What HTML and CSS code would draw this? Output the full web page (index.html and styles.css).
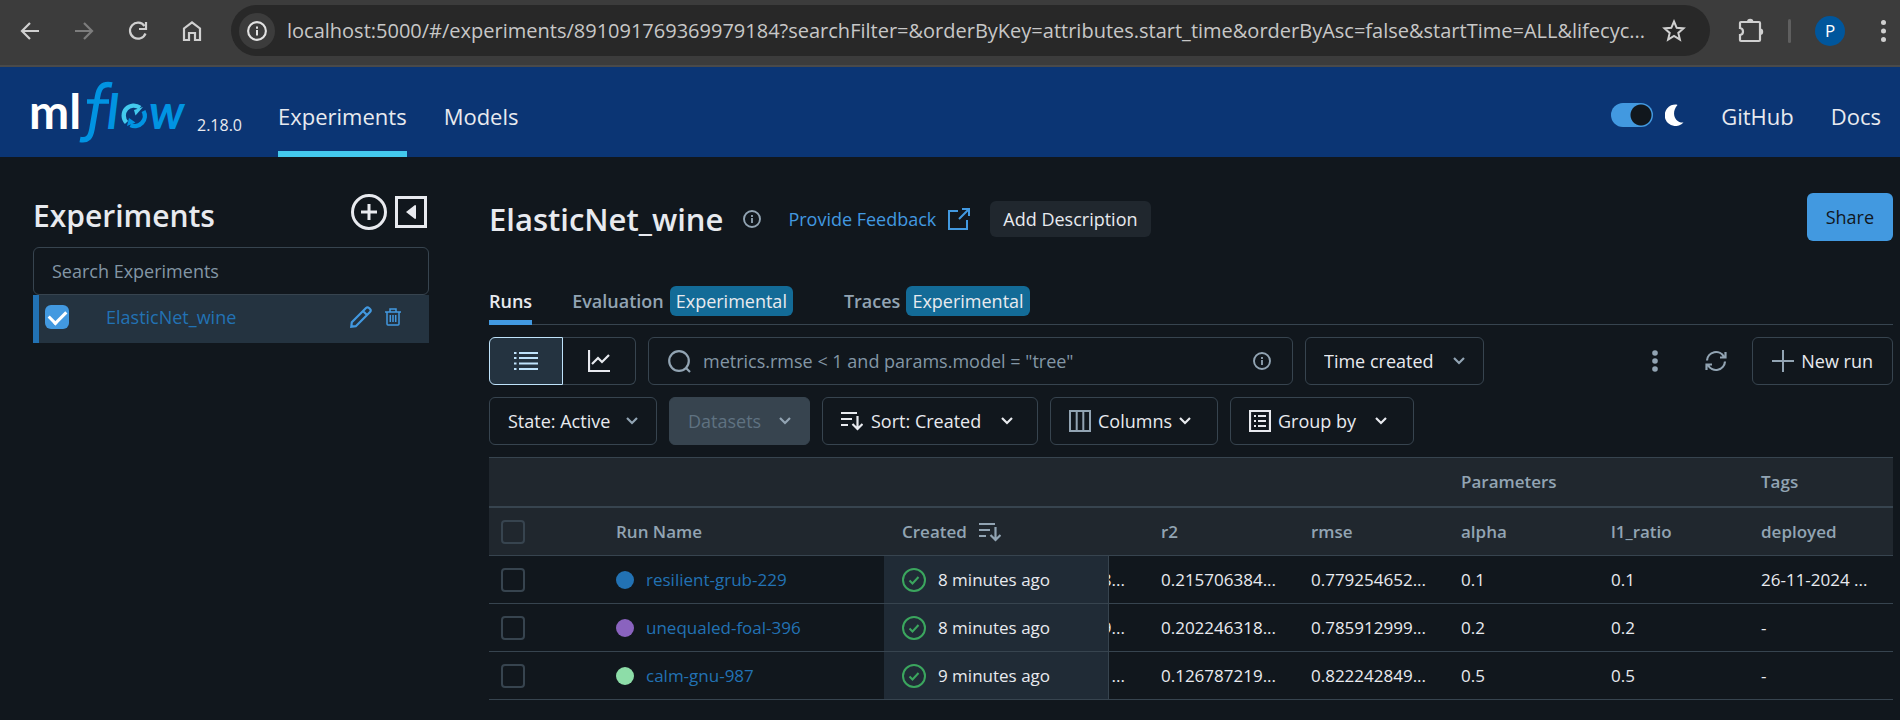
FILE: index.html
```
<!DOCTYPE html>
<html lang="en">
<head>
<meta charset="utf-8">
<title>ElasticNet_wine - MLflow</title>
<link rel="stylesheet" href="styles.css">
</head>
<body>
<svg class="defs" aria-hidden="true">
  <symbol id="chevron" viewBox="0 0 12 8"><path d="M1 1l5 5 5-5" fill="none" stroke="currentColor" stroke-width="2.2"/></symbol>
  <symbol id="info" viewBox="0 0 18 18"><circle cx="9" cy="9" r="8" fill="none" stroke="currentColor" stroke-width="1.9"/><path d="M9 8v5M9 5v2" stroke="currentColor" stroke-width="1.8"/></symbol>
  <symbol id="sort" viewBox="0 0 22 20"><path d="M0 2h16M0 8h11M0 14h7" stroke="currentColor" stroke-width="2.2"/><path d="M16.500 5v13M11.500 13l5 5 5-5" fill="none" stroke="currentColor" stroke-width="2.200"/></symbol>
  <symbol id="finished" viewBox="0 0 24 24"><circle cx="12" cy="12" r="11" fill="none" stroke="currentColor" stroke-width="2"/><path d="M7.500 12.500l3 3 6-6.500" fill="none" stroke="currentColor" stroke-width="2"/></symbol>
</svg>

<div class="browser">
  <div class="browser-nav">
    <button class="icon-btn" aria-label="Back"><svg width="20" height="20" viewBox="0 0 20 20"><path d="M19 10H2M10 2L2 10l8 8" fill="none" stroke="#d0d0d0" stroke-width="2.200"/></svg></button>
    <button class="icon-btn" aria-label="Forward"><svg width="20" height="20" viewBox="0 0 20 20"><path d="M1 10h17M10 2l8 8-8 8" fill="none" stroke="#7d7d7d" stroke-width="2.200"/></svg></button>
    <button class="icon-btn" aria-label="Reload"><svg width="20" height="20" viewBox="0 0 20 20"><path d="M17.500 12.500A8 8 0 1 1 16.500 5" fill="none" stroke="#d0d0d0" stroke-width="2.200"/><path d="M18 1v7h-7" fill="none" stroke="#d0d0d0" stroke-width="2.200"/></svg></button>
    <button class="icon-btn" aria-label="Home"><svg width="20" height="22" viewBox="0 0 20 22"><path d="M2 20V8.500L10 2.300l8 6.200V20h-5v-7H7v7z" fill="none" stroke="#d0d0d0" stroke-width="2.200"/></svg></button>
  </div>
  <div class="omnibox">
    <button class="site-info" aria-label="Site information"><svg width="20" height="20"><use href="#info"/></svg></button>
    <input class="url" aria-label="Address" value="localhost:5000/#/experiments/891091769369979184?searchFilter=&amp;orderByKey=attributes.start_time&amp;orderByAsc=false&amp;startTime=ALL&amp;lifecyc...">
    <button class="icon-btn" aria-label="Bookmark"><svg width="24" height="24" viewBox="0 0 24 24"><path d="M12 2.500l2.700 6.300 6.800.6-5.200 4.500 1.600 6.700-5.900-3.600-5.900 3.600 1.600-6.700L2.500 9.400l6.800-.6z" fill="none" stroke="#d0d0d0" stroke-width="2"/></svg></button>
  </div>
  <div class="browser-tools">
    <button class="icon-btn" aria-label="Extensions"><svg width="26" height="26" viewBox="0 0 26 26"><path d="M3 4h18a1 1 0 0 1 1 1v17a1 1 0 0 1-1 1H3a1 1 0 0 1-1-1v-5c4-.5 4-6.500 0-7V5a1 1 0 0 1 1-1z" fill="none" stroke="#d0d0d0" stroke-width="2.200"/><path d="M9 4a3.200 3.200 0 0 1 6.400 0zM22 10.500a3.200 3.200 0 0 1 0 6.400z" fill="#d0d0d0"/></svg></button>
    <span class="divider"></span>
    <button class="avatar" aria-label="Profile">P</button>
    <button class="icon-btn" aria-label="Browser menu"><svg width="5" height="22" viewBox="0 0 5 22" fill="#d0d0d0"><circle cx="2.500" cy="2.500" r="2.500"/><circle cx="2.500" cy="11" r="2.500"/><circle cx="2.500" cy="19.500" r="2.500"/></svg></button>
  </div>
</div>

<header class="header">
  <a class="logo" href="#" aria-label="mlflow">
    <svg width="170" height="62" viewBox="-6 0 170 62">
      <g class="logo-text">
        <text x="-3" y="48" fill="#fff">ml</text>
        <text x="75" y="48" fill="#0194e2" font-style="italic">l</text>
        <text x="117" y="48" fill="#0194e2" font-style="italic">w</text>
      </g>
      <path d="M80 4c-10-2-13 3-14.500 12L60 48c-1.500 8-4 12-12 10.500" fill="none" stroke="#0194e2" stroke-width="5.500"/>
      <path d="M55 20.500h22" stroke="#0194e2" stroke-width="4.500"/>
      <path d="M94.500 41.500A10 10 0 0 1 108 26.800" fill="none" stroke="#43c9ed" stroke-width="4.400"/>
      <path d="M111 26l-9 3 1.500 5.500z" fill="#43c9ed"/>
      <path d="M111.500 30a10 10 0 0 1-13 14" fill="none" stroke="#0194e2" stroke-width="4.400"/>
      <path d="M95 45l2-8 6.500 4.500z" fill="#0194e2"/>
    </svg>
  </a>
  <span class="version">2.18.0</span>
  <nav class="nav">
    <a class="nav-link active" href="#">Experiments</a>
    <a class="nav-link" href="#">Models</a>
  </nav>
  <div class="header-right">
    <label class="theme">
      <input class="switch" type="checkbox" role="switch" checked aria-label="Dark mode">
      <svg width="19" height="22" viewBox="0 0 19 22"><path d="M11.500.5A10.800 10.800 0 1 0 18.500 18.500C10 19 5.500 9 12.500 1z" fill="#fff"/></svg>
    </label>
    <a class="nav-link" href="#">GitHub</a>
    <a class="nav-link" href="#">Docs</a>
  </div>
</header>

<div class="page">
  <aside class="sidebar">
    <div class="sidebar-head">
      <h2 class="title">Experiments</h2>
      <div class="sidebar-actions">
        <button class="icon-btn" aria-label="Create experiment"><svg width="36" height="36" viewBox="0 0 36 36" fill="none" stroke="#e8eaef" stroke-width="3"><circle cx="18" cy="18" r="16.500"/><path d="M10 18h16M18 10v16"/></svg></button>
        <button class="icon-btn" aria-label="Hide sidebar"><svg width="32" height="32" viewBox="0 0 32 32"><rect x="1.500" y="1.500" width="29" height="29" fill="none" stroke="#e8eaef" stroke-width="3"/><path d="M11 16l9-7q1 0 1 1v12q0 1-1 1z" fill="#e8eaef"/></svg></button>
      </div>
    </div>
    <input class="field search-exp" type="text" placeholder="Search Experiments" aria-label="Search Experiments">
    <div class="exp-item">
      <input class="check" type="checkbox" checked aria-label="ElasticNet_wine">
      <a class="exp-name" href="#">ElasticNet_wine</a>
      <button class="icon-btn" aria-label="Rename"><svg width="22" height="22" viewBox="0 0 22 22" fill="none" stroke="#4299e0" stroke-width="2.200"><path d="M1.300 20.700l.5-4.500L16 2q1.500-1.300 3 0l1 1q1.500 1.500 0 3L5.800 20.200zM13 5l4 4"/></svg></button>
      <button class="icon-btn" aria-label="Delete"><svg width="16" height="18" viewBox="0 0 16 18" fill="none" stroke="#4299e0" stroke-width="1.500"><path d="M0 4h16M5 4V1h6v3M2 4v12q0 1 1 1h10q1 0 1-1V4M5.300 7v7M8 7v7M10.700 7v7"/></svg></button>
    </div>
  </aside>

  <main class="main">
    <div class="main-head">
      <h1 class="title">ElasticNet_wine</h1>
      <button class="icon-btn muted" aria-label="Experiment info"><svg width="18" height="18"><use href="#info"/></svg></button>
      <a class="feedback" href="#">Provide Feedback
        <svg width="22" height="22" viewBox="0 0 22 22" fill="none" stroke="currentColor" stroke-width="2"><path d="M10 3H1v18h18v-9M14 1h7v7M21 1L11 11"/></svg>
      </a>
      <button class="add-desc">Add Description</button>
      <button class="share">Share</button>
    </div>

    <div class="tabs" role="tablist">
      <button class="tab selected" role="tab" aria-selected="true">Runs</button>
      <button class="tab" role="tab">Evaluation <span class="badge">Experimental</span></button>
      <button class="tab" role="tab">Traces <span class="badge">Experimental</span></button>
    </div>

    <div class="toolbar">
      <div class="segmented">
        <button class="seg on" aria-label="List view"><svg width="24" height="20" viewBox="0 0 24 20" stroke="#bfe3fb" stroke-width="2.200"><path d="M0 2h2.500M5 2h19M0 7h2.500M5 7h19M0 12.500h2.500M5 12.500h19M0 18h2.500M5 18h19"/></svg></button>
        <button class="seg" aria-label="Chart view"><svg width="22" height="22" viewBox="0 0 22 22" fill="none" stroke="#e8eaef" stroke-width="2.200"><path d="M1 0v21h21M4 14l6-6 4 4 7-7"/></svg></button>
      </div>
      <label class="field search">
        <svg width="23" height="23" viewBox="0 0 23 23" fill="none" stroke="currentColor" stroke-width="2.200"><circle cx="11" cy="11" r="9.800"/><path d="M18 18l4 4"/></svg>
        <input class="search-input" type="text" placeholder='metrics.rmse &lt; 1 and params.model = "tree"' aria-label="Search runs">
        <svg width="18" height="18"><use href="#info"/></svg>
      </label>
      <div class="select w-time"><select aria-label="Time created"><option>Time created</option></select><svg class="chev"><use href="#chevron"/></svg></div>
      <div class="toolbar-end">
        <button class="icon-btn muted" aria-label="More"><svg width="6" height="22" viewBox="0 0 6 22" fill="currentColor"><circle cx="3" cy="3" r="2.800"/><circle cx="3" cy="11" r="2.800"/><circle cx="3" cy="19" r="2.800"/></svg></button>
        <button class="icon-btn muted" aria-label="Refresh"><svg width="22" height="22" viewBox="0 0 22 22" fill="none" stroke="currentColor" stroke-width="2.200"><path d="M2 10.500a9 9 0 0 1 17-3.500M20.500 2v5.500H15M20 11.500a9 9 0 0 1-17 3.500M1.500 20v-5.500H7"/></svg></button>
        <button class="btn"><svg class="muted" width="22" height="22" viewBox="0 0 22 22" stroke="currentColor" stroke-width="2"><path d="M0 11h22M11 0v22"/></svg>New run</button>
      </div>
    </div>

    <div class="toolbar">
      <div class="select w-state"><select aria-label="State"><option>State: Active</option></select><svg class="chev"><use href="#chevron"/></svg></div>
      <div class="select w-data disabled"><select aria-label="Datasets" disabled><option>Datasets</option></select><svg class="chev"><use href="#chevron"/></svg></div>
      <div class="select w-sort light"><svg class="lead" width="22" height="20"><use href="#sort"/></svg><select aria-label="Sort"><option>Sort: Created</option></select><svg class="chev"><use href="#chevron"/></svg></div>
      <button class="btn w-state"><svg class="muted" width="22" height="22" viewBox="0 0 22 22" fill="none" stroke="currentColor" stroke-width="2"><path d="M1 1h20v20H1zM7.700 1v20M14.300 1v20"/></svg>Columns<svg class="chev"><use href="#chevron"/></svg></button>
      <button class="btn w-group"><svg width="22" height="22" viewBox="0 0 22 22" fill="none" stroke="currentColor" stroke-width="2.200"><path d="M1 1h20v20H1zM5 6h2M9 6h8M5 11h2M9 11h8M5 16h2M9 16h8"/></svg>Group by<svg class="chev far"><use href="#chevron"/></svg></button>
    </div>

    <table class="runs">
      <colgroup><col class="c-check"><col><col class="c-created"><col class="c-peek"><col class="c-val"><col class="c-val"><col class="c-val"><col class="c-val"><col class="c-val"></colgroup>
      <thead>
        <tr class="groups"><th colspan="6"></th><th colspan="2">Parameters</th><th>Tags</th></tr>
        <tr><th class="cell-check"><input class="check" type="checkbox" aria-label="Select all runs"></th><th>Run Name</th><th><span class="with-icon">Created <svg width="22" height="20"><use href="#sort"/></svg></span></th><th></th><th>r2</th><th>rmse</th><th>alpha</th><th>l1_ratio</th><th>deployed</th></tr>
      </thead>
      <tbody>
        <tr><td class="cell-check"><input class="check" type="checkbox" aria-label="Select resilient-grub-229"></td><td><span class="run"><i class="dot blue"></i><a href="#">resilient-grub-229</a></span></td><td class="created"><span class="run"><svg class="ok" width="24" height="24"><use href="#finished"/></svg>8 minutes ago</span></td><td class="peek"><div>8...</div></td><td>0.215706384...</td><td>0.779254652...</td><td>0.1</td><td>0.1</td><td>26-11-2024 ...</td></tr>
        <tr><td class="cell-check"><input class="check" type="checkbox" aria-label="Select unequaled-foal-396"></td><td><span class="run"><i class="dot purple"></i><a href="#">unequaled-foal-396</a></span></td><td class="created"><span class="run"><svg class="ok" width="24" height="24"><use href="#finished"/></svg>8 minutes ago</span></td><td class="peek"><div>9...</div></td><td>0.202246318...</td><td>0.785912999...</td><td>0.2</td><td>0.2</td><td>-</td></tr>
        <tr><td class="cell-check"><input class="check" type="checkbox" aria-label="Select calm-gnu-987"></td><td><span class="run"><i class="dot green"></i><a href="#">calm-gnu-987</a></span></td><td class="created"><span class="run"><svg class="ok" width="24" height="24"><use href="#finished"/></svg>9 minutes ago</span></td><td class="peek"><div>...</div></td><td>0.126787219...</td><td>0.822242849...</td><td>0.5</td><td>0.5</td><td>-</td></tr>
      </tbody>
    </table>
  </main>
</div>
</body>
</html>
```
FILE: styles.css
```
* { box-sizing: border-box; }

body {
  margin: 0;
  min-height: 100vh;
  background: #11171d;
  color: #e8eaef;
  font: 18px/24px "Open Sans", "Noto Sans", sans-serif;
}

button, input, select { font: inherit; color: inherit; margin: 0; }
button { cursor: pointer; }
a { color: inherit; text-decoration: none; }
svg { display: block; flex: none; }
.defs { position: absolute; width: 0; height: 0; }
.icon-btn { display: flex; padding: 0; border: 0; background: none; }
.muted { color: #92a4b3; }
.chev { width: 12px; height: 8px; }

/* Browser bar */
.browser {
  display: flex;
  align-items: center;
  height: 67px;
  padding: 0 14px 4px 20px;
  background: #3c3c3c;
  border-bottom: 2px solid #4a4a4a;
}
.browser-nav { display: flex; align-items: center; gap: 34px; margin-right: 29px; }
.omnibox {
  display: flex;
  align-items: center;
  flex: 1;
  min-width: 0;
  height: 51px;
  padding: 0 24px 0 8px;
  border-radius: 26px;
  background: #282828;
}
.site-info {
  display: flex;
  align-items: center;
  justify-content: center;
  width: 36px;
  height: 36px;
  padding: 0;
  border: 0;
  border-radius: 50%;
  background: #3c3c3c;
  color: #e3e3e3;
}
.url {
  flex: 1;
  min-width: 0;
  padding: 0 12px;
  border: 0;
  background: none;
  color: #c7c7c7;
  font-size: 20px;
  outline: 0;
}
.browser-tools { display: flex; align-items: center; margin-left: 28px; }
.divider { width: 3px; height: 24px; margin: 0 24px; border-radius: 2px; background: #5f5f5f; }
.avatar {
  width: 30px;
  height: 30px;
  margin-right: 36px;
  padding: 0;
  border: 0;
  border-radius: 50%;
  background: #00569c;
  color: #fff;
  font-size: 17px;
}

/* Header */
.header {
  display: flex;
  align-items: flex-end;
  height: 90px;
  padding: 0 19px 0 26px;
  background: #0b3574;
}
.logo { margin-bottom: 14px; }
.logo-text { font: 700 48px "Lato", sans-serif; }
.version { margin: 0 36px 20px 1px; font-size: 16px; }
.nav, .header-right { display: flex; gap: 37px; }
.header-right { margin-left: auto; }
.nav-link {
  height: 55px;
  border-bottom: 6px solid transparent;
  font-size: 22px;
  line-height: 28px;
}
.nav-link.active { border-color: #43c9ed; }
.theme { display: flex; align-items: center; gap: 12px; height: 25px; }
.switch {
  appearance: none;
  width: 42px;
  height: 24px;
  border-radius: 12px;
  background: radial-gradient(circle at 30px 12px, #11171d 10px, #4299e0 11px);
}

/* Page */
.page { display: flex; align-items: flex-start; gap: 60px; padding: 36px 7px 0 33px; }
.title { margin: 0; font-size: 31px; line-height: 44px; font-weight: 600; }

.sidebar { flex: none; width: 396px; }
.sidebar-head { display: flex; justify-content: space-between; align-items: flex-start; height: 54px; }
.sidebar-head .title { font-size: 30px; line-height: 46px; }
.sidebar-actions { display: flex; align-items: center; gap: 8px; padding: 1px 2px 0 0; }
.field {
  height: 48px;
  border: 1px solid #37444f;
  border-radius: 6px;
  background: transparent;
}
.field::placeholder, .search-input::placeholder { color: #8396a5; opacity: 1; }
.search-exp { display: block; width: 100%; padding: 0 18px; }
.exp-item {
  display: flex;
  align-items: center;
  height: 48px;
  padding: 0 28px 4px 6px;
  border-left: 6px solid #2272b4;
  background: #243340;
  gap: 13px;
}
.exp-name { flex: 1; margin-left: 24px; color: #2272b4; }
.check {
  appearance: none;
  display: block;
  width: 24px;
  height: 24px;
  border: 1px solid #37444f;
  border-radius: 4px;
  outline: 0;
}
.check:not(:checked) { border-width: 2px; }
.check:checked {
  border: 0;
  border-radius: 6px;
  background: #4299e0;
  display: grid;
  place-items: center;
}
.check:checked::after {
  content: "";
  width: 8px;
  height: 14px;
  margin-bottom: 4px;
  border: solid #fff;
  border-width: 0 3px 3px 0;
  transform: rotate(45deg);
}

.main { flex: 1; min-width: 0; }
.main-head { display: flex; align-items: center; height: 52px; }
.main-head .title { margin-right: 20px; }
.feedback { display: flex; align-items: center; gap: 12px; margin: 0 20px 0 27px; color: #4299e0; }
.add-desc { height: 36px; padding: 0 13px; border: 0; border-radius: 6px; background: #20272e; }
.share {
  align-self: flex-start;
  height: 48px;
  margin-left: auto;
  padding: 0 19px;
  border: 0;
  border-radius: 6px;
  background: #4299e0;
  color: #11171d;
}

.tabs {
  display: flex;
  align-items: flex-end;
  gap: 40px;
  height: 80px;
  border-bottom: 1px solid #37444f;
}
.tab {
  display: flex;
  align-items: center;
  gap: 6px;
  height: 44px;
  margin-bottom: -1px;
  padding: 0 11px 0 0;
  border: 0;
  border-bottom: 5px solid transparent;
  background: none;
  color: #92a4b3;
  font-weight: 600;
}
.tab.selected { padding-right: 0; border-color: #4299e0; color: #e8eaef; }
.badge {
  padding: 3px 6px;
  border-radius: 6px;
  background: #136b97;
  color: #e8eaef;
  font-weight: 400;
}

.toolbar { display: flex; align-items: center; gap: 12px; margin-top: 12px; }
.segmented { display: flex; }
.seg {
  display: grid;
  place-items: center;
  width: 73px;
  height: 48px;
  padding: 0;
  border: 1px solid #37444f;
  border-left: 0;
  border-radius: 0 6px 6px 0;
  background: none;
}
.seg.on { width: 74px; border: 1px solid #bfe3fb; border-radius: 6px 0 0 6px; background: #243340; }
.search { display: flex; align-items: center; width: 645px; padding: 0 21px 0 19px; color: #92a4b3; }
.search-input { flex: 1; min-width: 0; margin: 0 12px; padding: 0; border: 0; background: none; outline: 0; }

.btn, .select {
  display: flex;
  align-items: center;
  height: 48px;
  padding: 0 18px;
  border: 1px solid #37444f;
  border-radius: 6px;
  background: none;
}
.btn { gap: 7px; }
.btn .far { margin-left: 12px; }
.select select { flex: 1; min-width: 0; padding: 0; border: 0; background: none; appearance: none; outline: 0; }
.select .chev { color: #92a4b3; }
.select.light .chev, .lead { color: #e8eaef; }
.lead { margin-right: 8px; }
.select.light { padding-right: 24px; }
.disabled { background: #37444f; color: #5f7281; }
.disabled select { opacity: 1; }
.w-time { width: 179px; }
.w-state { width: 168px; }
.w-data { width: 141px; }
.w-sort { width: 216px; }
.w-group { width: 184px; }
.toolbar-end { display: flex; align-items: center; gap: 47px; margin-left: auto; }
.toolbar-end .btn { margin-left: -22px; padding: 0 19px; }

/* Runs table */
.runs {
  width: 100%;
  margin-top: 12px;
  border-collapse: separate;
  border-spacing: 0;
  border-top: 1px solid #37444f;
  table-layout: fixed;
  font-size: 17px;
}
.c-check { width: 109px; }
.c-created { width: 225px; }
.c-peek { width: 34px; }
.c-val { width: 150px; }
.runs th, .runs td {
  height: 48px;
  padding: 0 0 0 18px;
  border-bottom: 1px solid #37444f;
  text-align: left;
  white-space: nowrap;
}
.runs th { background: #20272e; color: #92a4b3; font-weight: 600; }
.runs .groups th { height: 50px; border-bottom-width: 2px; }
.runs .cell-check { padding-left: 12px; }
.with-icon { display: flex; align-items: center; gap: 12px; }
.run { display: flex; align-items: center; gap: 12px; }
.run a { color: #2272b4; }
.dot { width: 18px; height: 18px; border-radius: 50%; }
.blue { background: #2272b4; }
.purple { background: #8a63bf; }
.green { background: #8ddda8; }
.ok { color: #3ba65e; }
.runs .created { border-right: 1px solid #37444f; background: #202b36; }
.runs .peek { padding: 0; }
.peek div { display: flex; justify-content: flex-end; width: 16px; overflow: hidden; }
```
